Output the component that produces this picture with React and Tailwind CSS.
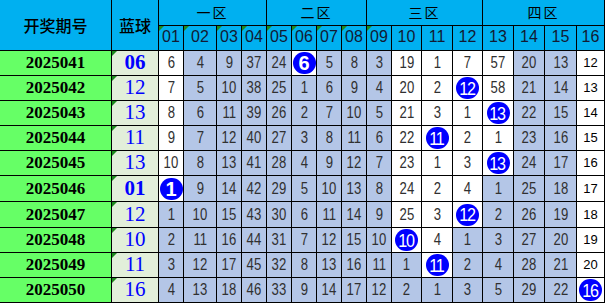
import React from "react";

// each cell: first letter = background (w white, b blue-grey, o ball), rest = number
const rows = [
  ["2025041", "06", "w6 b4 b9 b37 b24 o6 b5 b8 b3 w19 w1 w7 w57 b20 b13 w12"],
  ["2025042", "12", "w7 b5 b10 b38 b25 b1 b6 b9 b4 w20 w2 o12 w58 b21 b14 w13"],
  ["2025043", "13", "w8 b6 b11 b39 b26 b2 b7 b10 b5 w21 w3 w1 o13 b22 b15 w14"],
  ["2025044", "11", "w9 b7 b12 b40 b27 b3 b8 b11 b6 w22 o11 w2 w1 b23 b16 w15"],
  ["2025045", "13", "w10 b8 b13 b41 b28 b4 b9 b12 b7 w23 w1 w3 o13 b24 b17 w16"],
  ["2025046", "01", "o1 b9 b14 b42 b29 b5 b10 b13 b8 w24 w2 w4 b1 b25 b18 w17"],
  ["2025047", "12", "b1 b10 b15 b43 b30 b6 b11 b14 b9 w25 w3 o12 b2 b26 b19 w18"],
  ["2025048", "10", "b2 b11 b16 b44 b31 b7 b12 b15 b10 o10 w4 b1 b3 b27 b20 w19"],
  ["2025049", "11", "b3 b12 b17 b45 b32 b8 b13 b16 b11 b1 o11 b2 b4 b28 b21 w20"],
  ["2025050", "16", "b4 b13 b18 b46 b33 b9 b14 b17 b12 b2 b1 b3 b5 b29 b22 o16"],
];

const zones = ["一区", "二区", "三区", "四区"];
const cols = ["01", "02", "03", "04", "05", "06", "07", "08", "09", "10", "11", "12", "13", "14", "15", "16"];

const cjk = "font-['Noto_Sans_CJK_SC',sans-serif]";

// little green marker in the top-left corner (excel "number stored as text")
const Corner = () => (
  <span className="absolute left-0 top-0 w-0 h-0 border-t-[5px] border-r-[5px] border-t-[#1f8a1f] border-r-transparent" />
);

const Ball = ({ n }) => (
  <span className="flex items-center justify-center w-[23px] h-[22px] rounded-full bg-[#0000ff] text-white font-['Liberation_Sans',sans-serif] leading-none">
    {n.length > 1 ? (
      <span className="text-[19px] tracking-[-1.5px] scale-x-[0.85] inline-block -ml-[1px]">{n}</span>
    ) : (
      <span className="text-[20px] font-bold">{n}</span>
    )}
  </span>
);

const Cell = ({ code, last }) => {
  const kind = code[0];
  const n = code.slice(1);
  const bg = kind === "b" ? "bg-[#b4c6e7]" : "bg-white";
  return (
    <div className={`${bg} flex items-center justify-center font-['Liberation_Sans',sans-serif]`}>
      {kind === "o" ? (
        <Ball n={n} />
      ) : last ? (
        <span className="text-[13px] text-black">{n}</span>
      ) : (
        <span className="inline-block text-[16px] text-[#303030] scale-x-[0.82]">{n}</span>
      )}
    </div>
  );
};

export default function App() {
  return (
    <div className="w-[607px] h-[303px] bg-white overflow-hidden">
      <div className="grid w-fit bg-black gap-px pr-px pb-px grid-cols-[111px_46px_24px_32px_24px_24px_24px_24px_24px_24px_24px_29px_30px_29px_30px_30px_31px_27px] grid-rows-[25px_24px_24px_24px_24px_24px_24px_25px_25px_24px_24px_24px]">
        {/* header */}
        <div className={`row-span-2 bg-[#00b0f0] flex items-center justify-center text-[16px] font-medium text-black ${cjk}`}>
          开奖期号
        </div>
        <div className={`row-span-2 bg-[#00b0f0] flex items-center justify-center text-[16px] font-medium text-black ${cjk}`}>
          蓝球
        </div>
        {zones.map((z) => (
          <div
            key={z}
            className={`col-span-4 bg-[#00b0f0] flex items-center justify-center text-[14px] tracking-[2px] text-black ${cjk}`}
          >
            {z}
          </div>
        ))}
        {cols.map((c, i) => (
          <div
            key={c}
            className="relative bg-[#00b0f0] flex items-end justify-center pb-[1px] text-[16px] text-[#121a33] font-['Liberation_Sans',sans-serif]"
          >
            {i < 9 && <Corner />}
            {c}
          </div>
        ))}

        {/* data rows */}
        {rows.map(([period, blue, cells]) => (
          <React.Fragment key={period}>
            <div className="bg-[#66ff66] flex items-center justify-center text-[17px] font-bold text-black font-['Liberation_Serif',serif]">
              {period}
            </div>
            <div
              className={`relative bg-[#e2efda] flex items-center justify-center text-[21px] text-[#0000ff] font-['Liberation_Serif',serif] ${
                blue.startsWith("0") ? "font-bold" : ""
              }`}
            >
              <Corner />
              {blue}
            </div>
            {cells.split(" ").map((code, i) => (
              <Cell key={i} code={code} last={i === 15} />
            ))}
          </React.Fragment>
        ))}
      </div>
    </div>
  );
}
